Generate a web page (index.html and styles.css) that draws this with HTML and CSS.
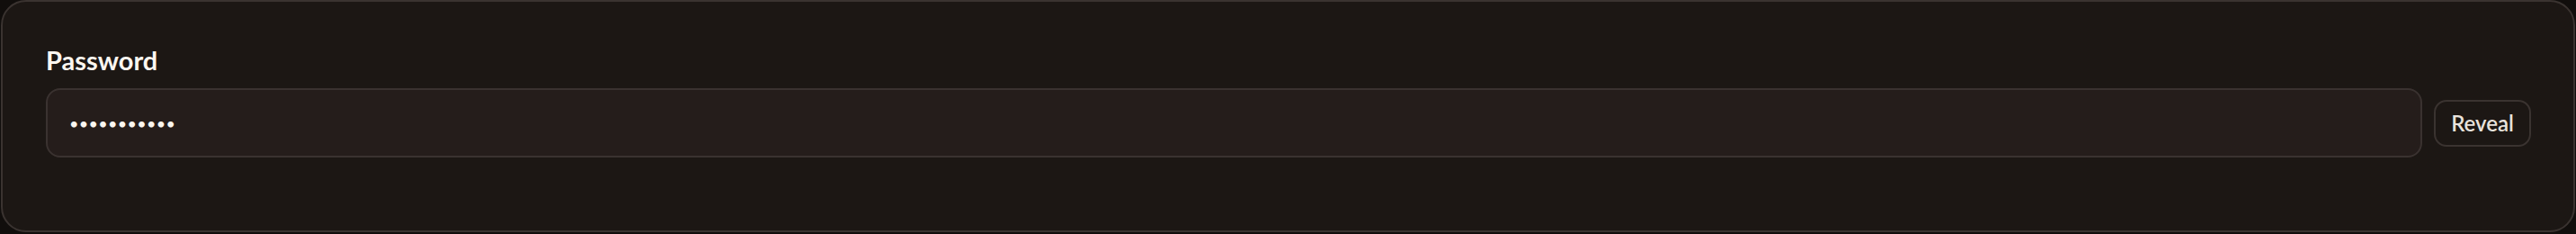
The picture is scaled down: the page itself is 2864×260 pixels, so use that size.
FILE: index.html
```html
<!DOCTYPE html>
<html lang="en">
<head>
  <meta charset="UTF-8" />
  <title>Password</title>
  <meta name="viewport" content="width=device-width, initial-scale=1" />
  <link rel="stylesheet" href="styles.css">
</head>
<body>

  <!-- Password field card -->
  <div class="card">
    <label class="field-label" for="password">Password</label>
    <div class="field-row">
      <input type="password" id="password" class="field-input" value="hunter2pass" />
      <button class="reveal-btn" id="reveal-btn">Reveal</button>
    </div>
  </div>

<script>
  const input = document.getElementById('password');
  const revealBtn = document.getElementById('reveal-btn');

  // Toggle password visibility
  revealBtn.addEventListener('click', () => {
    const hidden = input.type === 'password';
    input.type = hidden ? 'text' : 'password';
    revealBtn.textContent = hidden ? 'Hide' : 'Reveal';
  });
</script>

</body>
</html>
```

FILE: styles.css
```css
body {
  font-family: 'Lato', 'Noto Sans', sans-serif;
  margin: 0;
  background-color: #110e0c;
}

.card {
  box-sizing: border-box;
  height: 258px;
  margin: 0 1px;
  padding: 47px 47px 0 48px;
  background: #1c1714;
  border: 2px solid #3a3330;
  border-radius: 28px;
}

.field-label {
  display: block;
  font-size: 29px;
  line-height: 36px;
  font-weight: 700;
  color: #fbf6f0;
  margin-bottom: 13px;
}

.field-row {
  display: flex;
  align-items: center;
  gap: 13px;
}

.field-input {
  flex: 1;
  box-sizing: border-box;
  height: 77px;
  padding: 0 24px 0 24px;
  background: #251d1b;
  border: 2px solid #3a3230;
  border-radius: 16px;
  color: #fbf6f0;
  font-family: inherit;
  font-size: 18px;
  letter-spacing: 0.3px;
  outline: none;
}

.reveal-btn {
  box-sizing: border-box;
  width: 108px;
  height: 52px;
  background: #1c1714;
  border: 2px solid #3a3330;
  border-radius: 14px;
  color: #e8e2dc;
  font-family: inherit;
  font-size: 24px;
  font-weight: 600;
  cursor: pointer;
}
```
